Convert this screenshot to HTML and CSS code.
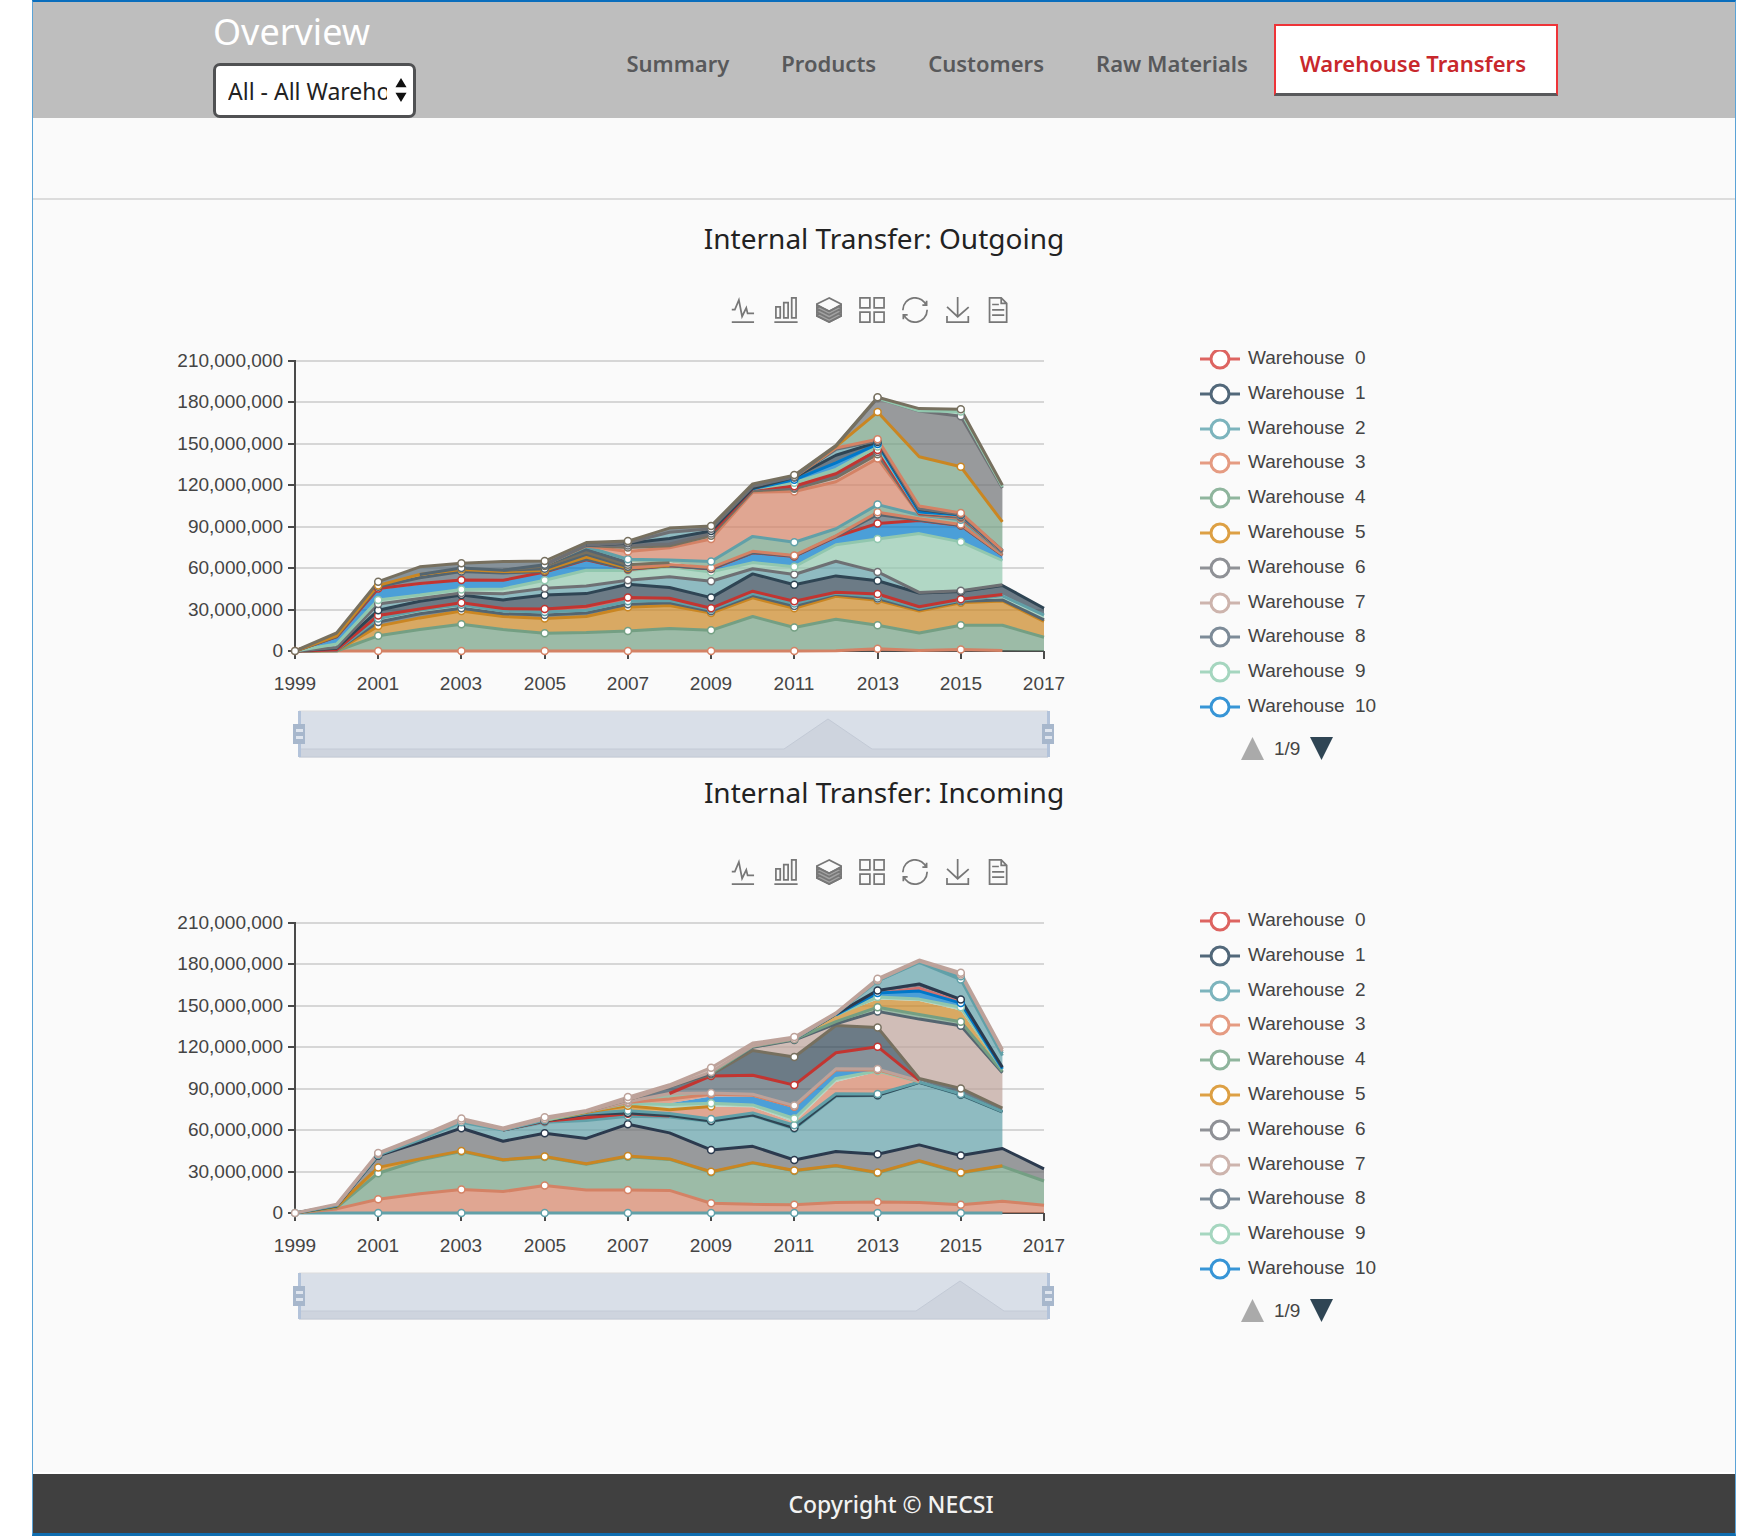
FILE: index.html
```html
<!DOCTYPE html>
<html lang="en">
<head>
<meta charset="utf-8">
<meta name="viewport" content="width=device-width, initial-scale=1">
<title>Overview - Warehouse Transfers</title>
<link rel="stylesheet" href="styles.css">
</head>
<body>
<svg class="sprite" aria-hidden="true">
  <symbol id="i-line" viewBox="0 0 60 60"><path d="M4.1,28.9h7.1l9.3-22l7.4,38l9.7-19.7l3,12.8h14.9M4.1,58h51.4"/></symbol>
  <symbol id="i-bar" viewBox="0 0 60 60"><path d="M6.7,22.9h10V48h-10V22.9zM24.9,13h10v35h-10V13zM43.2,2h10v46h-10V2zM3.1,58h53.7"/></symbol>
  <symbol id="i-stack" viewBox="0 0 60 60"><path fill="#a2a2a2" d="M0,17.500L30.400,32.800L60,17.500V42.500L30.400,57.800L0,42.500z"/><path d="M8.2,38.4l-8.4,4.1l30.6,15.3L60,42.5l-8.1-4.1l-21.5,11L8.2,38.4z M51.9,30l-8.1,4.2l-13.4,6.9l-13.9-6.9L8.2,30l-8.4,4.2l8.4,4.2l22.2,11l21.5-11l8.1-4.2L51.9,30z M51.9,21.7l-8.1,4.2L35.7,30l-5.3,2.8L24.9,30l-8.4-4.1l-8.3-4.2l-8.4,4.2L8.2,30l8.3,4.2l13.9,6.9l13.4-6.9l8.1-4.2l8.1-4.1L51.9,21.7zM30.4,2.2L-0.2,17.5l8.4,4.1l8.3,4.2l8.4,4.2l5.5,2.7l5.3-2.7l8.1-4.2l8.1-4.2l8.1-4.1L30.4,2.2z"/></symbol>
  <symbol id="i-tile" viewBox="0 0 60 60"><path d="M2.3,2.2h22.8V25H2.3V2.2z M35,2.2h22.8V25H35V2.2zM2.3,35h22.8v22.8H2.3V35z M35,35h22.8v22.8H35V35z"/></symbol>
  <symbol id="i-restore" viewBox="0 0 60 60"><path d="M47,18.9h9.8V8.7 M56.3,20.1 C52.1,9,40.5,0.6,26.8,2.1C12.6,3.7,1.6,16.2,2.1,30.6 M13,41.1H3.1v10.2 M3.7,39.9c4.2,11.1,15.8,19.5,29.5,18 c14.2-1.6,25.2-14.1,24.7-28.5"/></symbol>
  <symbol id="i-save" viewBox="0 0 60 60"><path d="M4.7,22.9L29.3,45.5L54.7,23.4M4.6,43.6L4.6,58L53.8,58L53.8,43.6M29.2,45.1L29.2,0"/></symbol>
  <symbol id="i-data" viewBox="8 0 46 60"><path d="M17.5,17.3H33 M45.4,29.5h-28 M11.5,2v56H51V14.8L38.4,2H11.5z M38.4,2.2v12.7H51 M45.4,41.7h-28"/></symbol>
</svg>

<div class="frame">
  <header class="header">
    <div class="filter">
      <label class="filter-label" for="warehouse">Overview</label>
      <div class="select-wrap">
        <select class="select" id="warehouse">
          <option>All - All Warehouses</option>
        </select>
        <svg class="select-arrows" viewBox="0 0 12 26" aria-hidden="true"><path d="M6 0l6 10H0zM6 26l6-10H0z"/></svg>
      </div>
    </div>
    <nav class="nav">
      <a class="nav-link" href="#summary">Summary</a>
      <a class="nav-link" href="#products">Products</a>
      <a class="nav-link" href="#customers">Customers</a>
      <a class="nav-link" href="#materials">Raw Materials</a>
      <a class="nav-link is-active" href="#transfers">Warehouse Transfers</a>
    </nav>
  </header>
  <div class="subbar"></div>

  <main class="main">
    <section class="chart" data-chart="outgoing">
      <h2 class="chart-title">Internal Transfer: Outgoing</h2>
    </section>
    <section class="chart" data-chart="incoming">
      <h2 class="chart-title">Internal Transfer: Incoming</h2>
    </section>
  </main>

  <footer class="footer">Copyright © NECSI</footer>
</div>
<script src="charts.js"></script>
</body>
</html>
```
FILE: styles.css
```css
* { box-sizing: border-box; }

body {
  margin: 0;
  background: #fff;
  font-family: "Noto Sans", "Open Sans", sans-serif;
  color: #222;
}

.sprite { position: absolute; width: 0; height: 0; }

.frame {
  display: flex;
  flex-direction: column;
  min-height: 100vh;
  margin: 0 24px 0 32px;
  background: #fafafa;
  border: 1px solid #5ba3d6;
  border-top: 2px solid #0a6ebd;
  border-bottom: 3px solid #0f6db0;
}

/* Header */
.header {
  display: flex;
  justify-content: space-between;
  align-items: flex-start;
  padding: 0 177px 0 180px;
  background: #bebebe;
}

.filter { display: flex; flex-direction: column; }

.filter-label {
  height: 61px;
  font-size: 36px;
  line-height: 59px;
  color: #fff;
}

.select-wrap { position: relative; width: 203px; }

.select {
  display: block;
  width: 100%;
  height: 55px;
  padding: 2px 26px 0 12px;
  appearance: none;
  border: 3px solid #505153;
  border-radius: 7px;
  background: #fff;
  font: 400 23px/47px "Noto Sans", "Open Sans", sans-serif;
  color: #222;
}

.select-arrows {
  position: absolute;
  top: 15px;
  right: 9px;
  width: 12px;
  height: 24px;
  fill: #111;
}

.nav { display: flex; margin-top: 22px; }

.nav-link {
  padding: 3px 24px 0;
  border: 2px solid transparent;
  height: 72px;
  font-size: 22px;
  font-weight: 600;
  line-height: 68px;
  color: #58595b;
  text-decoration: none;
  white-space: nowrap;
}

.nav-link.is-active {
  padding-right: 30px;
  background: #fff;
  border-color: #ee3438;
  border-bottom: 3px solid #58595b;
  color: #c8282c;
}

.subbar { height: 82px; border-bottom: 2px solid #dcdcdc; }

/* Charts */
.main { flex: 1; }

.chart-title {
  margin: 0;
  padding-top: 18px;
  font-size: 28px;
  font-weight: 400;
  line-height: 40px;
  text-align: center;
}

.toolbar {
  display: flex;
  justify-content: center;
  gap: 17px;
  margin: 39px 0 17px;
  padding-right: 30px;
}

.chart + .chart .chart-title { padding-top: 2px; }
.chart + .chart .toolbar { margin-top: 47px; }

.tool { padding: 0; border: 0; background: none; }

.tool-icon {
  display: block;
  width: 26px;
  height: 26px;
  overflow: visible;
  fill: none;
  stroke: #777;
  stroke-width: 4;
}

.tool-icon.is-narrow { width: 20px; }

.chart-body {
  display: grid;
  grid-template-columns: minmax(0, 920px) 240px;
  gap: 120px;
  margin-left: 127px;
}

.plot { display: block; width: 100%; height: auto; }

.axis-text, .legend {
  font-family: "Liberation Sans", Arial, sans-serif;
  font-size: 19px;
}

.axis-text { fill: #444; }
.end { text-anchor: end; }
.mid { text-anchor: middle; }
.grid-line { stroke: #d6d6d6; stroke-width: 2; }
.axis-line { stroke: #4a4a4a; stroke-width: 2; fill: none; }
.band { opacity: 0.7; }
.series { fill: none; stroke-width: 3; stroke-linejoin: bevel; }
.dot { fill: #fff; stroke-width: 1.5; }
.zoom-bg { fill: #d9dfe8; }
.zoom-edge { stroke: #dddddd; stroke-width: 1; }
.zoom-shape { fill: #ced4de; stroke: #c3cad6; stroke-width: 1; }
.zoom-bar { fill: #b3c3da; }
.zoom-grip { fill: #a7b7cc; }
.zoom-slot { fill: #dfe5ee; }

.legend { color: #444; }

.legend-list {
  display: flex;
  flex-direction: column;
  justify-content: space-between;
  height: 372px;
  margin: 6px 0 0;
  padding: 0;
  list-style: none;
}

.legend-item {
  display: flex;
  align-items: center;
  gap: 8px;
  height: 24px;
  line-height: 24px;
  white-space: pre;
}

.legend-mark {
  width: 40px;
  height: 24px;
  fill: #fff;
  stroke-width: 3;
}

.legend-item:first-child .legend-mark { clip-path: inset(4px 0 0 0); }

.pager {
  display: flex;
  align-items: center;
  gap: 10px;
  margin: 19px 0 0 41px;
}

.page-button { padding: 0; border: 0; background: none; }
.page-arrow { display: block; width: 23px; height: 23px; }
.is-off { fill: #aaa; }
.is-on { fill: #2f4554; }

.footer {
  height: 61px;
  padding-left: 14px;
  border-top: 2px solid #fff;
  background: #404040;
  background-clip: padding-box;
  font-size: 23px;
  font-weight: 500;
  line-height: 60px;
  text-align: center;
  color: #f2f2f2;
}
```
FILE: charts.js
```js
const C = {
  red: '#c23531', slate: '#2f4554', teal: '#61a0a8', salmon: '#d48265',
  green: '#749f83', orange: '#ca8622', gray: '#6e7074', rose: '#bda29a',
  steel: '#546570', mint: '#91c7ae', blue: '#0078c9', taupe: '#77705f', navy: '#2b3a4e'
};

// Each layer: [area colour, line colour, first year, stacked totals in millions]
const DATA = {
  outgoing: {
    peak: 668,
    peakFrom: 624,
    layers: [
      ['salmon', 'salmon', 1999, [0,0,0,0,0,0,0,0,0,0,0,0,0,0.2,1.6,0.3,1,0.3]],
      ['green', 'green', 2000, [0,11,15.5,19.3,15.5,12.8,13.3,14.5,16.4,15,25,17,23,18.6,13,18.6,18.6,10]],
      ['orange', 'orange', 2000, [0.3,18,24,29,25,23.5,25,31.7,33,27.5,38.5,31,39.6,36.7,29,35,36.3,21.5]],
      ['steel', 'steel', 2000, [0.5,21,27,31,27,26,27.5,33.8,35,28.8,40.2,32.6,41,38,30,36,37,22.5]],
      ['mint', 'teal', 2000, [0.6,23.5,29.5,33.5,29,28.3,29.5,36,36.5,30,41.6,34.4,41.8,39.5,31,36.8,40,26]],
      ['red', 'red', 2000, [0.8,25.6,30.5,35,30.7,30.5,32.4,38.7,38.2,31,43.3,36,42.5,41.3,32,37.5,41]],
      ['slate', 'slate', 2000, [2,29.5,36,40.5,37,40.6,41.6,48.3,46,38.7,55.8,48,54.4,50.8,42,43,47.4,31]],
      ['teal', 'gray', 2000, [2.6,34,38,42,41.5,45.4,47,51.2,53.7,50.5,59.5,55.4,65,57.3,42.4,43.6,48]],
      ['mint', 'mint', 2000, [5,37,40.5,44.5,45,51.2,58.5,58.3,61,57.3,64,61,77,81,85,79,65.5]],
      ['blue', 'blue', 2000, [10,44.5,48,51,51,57,66,59,61.6,59.2,71,68.3,82.5,91.7,94,90.5,69], 'area'],
      ['red', 'red', 2000, [10.2,45.2,48.8,51.5,51.2,57.2,66.1,59.1,61.7,59.4,71.1,68.5,82.7,92.4,94.5,90.8,69.2]],
      ['steel', 'steel', 2000, [10.5,46.5,53,57.5,56.5,57.5,66.4,59.4,61.8,59.6,71.3,68.7,83,98.9,94.8,91,69.4]],
      ['orange', 'orange', 2000, [11,47.5,55.5,59,57.5,58.4,68,60,62]],
      ['salmon', 'salmon', 2008, [62.7,60.4,72.2,69.2,83.4,100.5,95.7,91.6,69.6]],
      ['steel', 'steel', 2003, [60,58.5,59.5,70,61]],
      ['rose', 'taupe', 2005, [61.5,71.5,62.5,64]],
      ['steel', 'steel', 2005, [62.5,73.5,64]],
      ['green', 'teal', 2006, [75.5,66.4,66,64.8,83,78.8,88.5,106,98.5,95,71]],
      ['salmon', 'salmon', 2006, [76,72,74.7,81,115,115.5,122.5,139.5,98.8,96.2,71.3]],
      ['rose', 'taupe', 2006, [76.3,75,76.2,83.5,116,117.5,125.6,142.5,99.2,96.8,71.6]],
      ['steel', 'gray', 2006, [76.6,76.5,77.5,85,117,118.2,127,144,99.5,97.2,71.8]],
      ['red', 'red', 2010, [117.5,119.3,128.4,145.5,99.8,97.8,72]],
      ['green', 'mint', 2011, [121.8,131.5,148,100.3,98.2,72.2]],
      ['blue', 'blue', 2011, [124,136.3,149.8,100.6,98.5,72.4]],
      ['slate', 'slate', 2007, [78,81.5,87,117.8,125.7,141.7,151.3,102.5,98.8,72.6]],
      ['teal', 'gray', 2007, [78.4,86,88.5,119.2,126,146,152.2,103,99,72.7]],
      ['salmon', 'salmon', 2012, [147,153.3,105,100,72.8]],
      ['green', 'orange', 2012, [148,173,140.7,133.4,93.5]],
      ['gray', 'gray', 2012, [148.4,183,173.8,170,118]],
      ['mint', 'mint', 2014, [174,173.4,118.8]],
      ['steel', 'taupe', 1999, [0,13,50.2,61,63.6,64.8,65.2,78.6,79.6,89,90.6,121,127.4,148.8,183.7,175.5,175,120]]
    ]
  },
  incoming: {
    peak: 800,
    peakFrom: 756,
    layers: [
      ['teal', 'teal', 1999, [0,0,0,0,0,0,0,0,0,0,0,0,0,0,0,0,0,0]],
      ['salmon', 'salmon', 2000, [3,10,14,17,15.5,20,16.7,16.6,16.4,7,6.3,6,7.7,8,7.5,6,8.5,5.6]],
      ['green', 'green', 2000, [4,28.8,38.4,44.5,38.2,40.6,35.3,40.8,38.8,29.5,36.1,30.5,34.1,29,37.5,29,33.8,23.2]],
      ['orange', 'orange', 2000, [4.5,33,39.2,45,38.6,41,35.7,41.2,39.2,29.9,36.5,30.8,34.5,29.4,37.9,29.4,34.2]],
      ['gray', 'navy', 2000, [5,41.5,51.2,61.4,52,57.8,54,64.3,58,45.7,48.3,38.4,44.5,42.5,49.3,41.6,46.7,32]],
      ['teal', 'teal', 2000, [5.4,42,53,65.7,60,65.7,67,70,69.6,66.2,70.6,61,84.6,85,94.4,85.4,73]],
      ['red', 'red', 2005, [66.5,69,71.8,70.2]],
      ['slate', 'slate', 2005, [66.8,71.5,72.4,70.6,66.6,71,61.6,85,85.3,94.6,85.8,73.2]],
      ['teal', 'teal', 2005, [67.2,72.3,74,72,68,72.5,63.5,86.4,86.2,94.8,86.2,73.4]],
      ['salmon', 'salmon', 2008, [74,77,76.6,65.7,94.8,102.3,95,86.4,73.6], 'area'],
      ['orange', 'orange', 2006, [73,77.6,74.7,77.2]],
      ['mint', 'mint', 2006, [73.4,79.2,78.5,79.5,78.3,68.4,97.5,102.8,95.1]],
      ['blue', 'blue', 2008, [79.5,84.4,84.4,76,103,103.3], 'area'],
      ['salmon', 'salmon', 2007, [80,82.5,86,85.2,77,103.6,103.6,95.3]],
      ['green', 'rose', 2007, [80.6,86.5,86.9,86,77.8,104.4,104.2,95.6]],
      ['steel', 'red', 2009, [99.3,99.8,92.6,116,120.4,96]],
      ['slate', 'taupe', 2007, [82,91.5,100.2,117.7,113,135.8,134.4,97.4,90.2,76]],
      ['rose', 'steel', 2009, [101,120,125.2,137,146,140.4,135.6,101.5]],
      ['green', 'green', 2010, [120.6,125.8,138.6,149,143.8,138.5,102.5]],
      ['orange', 'orange', 2012, [143.4,154.5,153.5,146.7,103], 'area'],
      ['mint', 'mint', 2013, [156.4,154.9,149,104]],
      ['blue', 'blue', 2013, [159.3,160.7,152,104.5]],
      ['red', 'red', 2013, [160.2,164,153.7,105], 'area'],
      ['navy', 'navy', 2012, [143.9,161.2,165.8,154.7,105.6]],
      ['teal', 'teal', 2012, [144.2,168,181.5,169,114]],
      ['blue', 'teal', 2014, [182,171.5,115.5]],
      ['rose', 'rose', 2001, [42.8,54.4,67,60.6,68,73.4,81.5,90.5,102,121,126.2,144.4,168.6,182.4,172.6,117]],
      ['rose', 'rose', 1999, [0,6.3,43.5,55.4,68.4,61.6,69.4,74.2,83.9,92.8,105.2,123,127.4,145,169.7,183.2,174,118.4]]
    ]
  }
};

const LEGEND = ['#dd6461', '#52687a', '#7cb4bd', '#e59b82', '#8fb59d', '#dda044',
  '#8f9196', '#cdb4ad', '#7d8b98', '#a5d6bf', '#3795d6'];

const TOOLS = [['line', 'Line'], ['bar', 'Bar'], ['stack', 'Stack'], ['tile', 'Tiled'],
  ['restore', 'Restore'], ['save', 'Save image'], ['data', 'Data view']];

const LEFT = 135, BASE = 311, STEP = 749 / 18, UNIT = 290 / 210;
const px = year => LEFT + (year - 1999) * STEP;
const py = value => BASE - value * UNIT;
const at = (year, value) => px(year).toFixed(1) + ',' + py(value).toFixed(1);

function drawLayers(layers) {
  const floor = {};
  for (let y = 1999; y <= 2017; y++) floor[y] = 0;
  let bands = '', lines = '', dots = '';
  for (const [area, line, start, values, mode] of layers) {
    const top = [], bottom = [];
    // A layer grows out of the stack one year before its first value
    if (start > 1999) {
      top.push(at(start - 1, floor[start - 1]));
      bottom.push(at(start - 1, floor[start - 1]));
    }
    values.forEach((v, i) => {
      const year = start + i;
      const value = Math.max(v, floor[year]);
      top.push(at(year, value));
      bottom.unshift(at(year, floor[year]));
      floor[year] = value;
      if (year % 2 && year < 2017 && !mode) {
        dots += `<circle class="dot" cx="${px(year).toFixed(1)}" cy="${py(value).toFixed(1)}" r="3.5" stroke="${C[line]}"/>`;
      }
    });
    bands += `<polygon class="band" fill="${C[area]}" points="${top.concat(bottom).join(' ')}"/>`;
    if (!mode) lines += `<polyline class="series" stroke="${C[line]}" points="${top.join(' ')}"/>`;
  }
  return bands + lines + dots;
}

function drawPlot(d) {
  let s = '';
  for (let v = 0; v <= 210; v += 30) {
    const y = Math.round(py(v));
    if (v) s += `<path class="grid-line" d="M${LEFT} ${y}H884"/>`;
    s += `<path class="axis-line" d="M128 ${y}H${LEFT}"/>`;
    s += `<text class="axis-text end" x="123" y="${y + 6}">${v ? v + ',000,000' : '0'}</text>`;
  }
  s += `<path class="axis-line" d="M${LEFT} 20V${BASE}H884"/>`;
  for (let y = 1999; y <= 2017; y += 2) {
    s += `<path class="axis-line" d="M${Math.round(px(y))} ${BASE}v8"/>`;
    s += `<text class="axis-text mid" x="${Math.round(px(y))}" y="350">${y}</text>`;
  }
  s += drawLayers(d.layers);
  s += '<rect class="zoom-bg" x="139" y="371" width="749" height="46"/><path class="zoom-edge" d="M139 371H888M139 417H888"/>';
  s += `<path class="zoom-shape" d="M139 417V409H${d.peakFrom}L${d.peak} 379L${d.peak + 44} 409H888V417z"/>`;
  for (const x of [139, 888]) {
    s += `<rect class="zoom-bar" x="${x - 1}" y="371" width="3" height="46"/>` +
      `<rect class="zoom-grip" x="${x - 6}" y="384" width="12" height="20"/>` +
      `<rect class="zoom-slot" x="${x - 3}" y="389" width="7" height="3"/><rect class="zoom-slot" x="${x - 3}" y="396" width="7" height="3"/>`;
  }
  return `<svg class="plot" viewBox="0 0 920 430" role="img">${s}</svg>`;
}

function drawLegend() {
  const items = LEGEND.map((c, i) =>
    `<li class="legend-item"><svg class="legend-mark" viewBox="0 0 40 24" stroke="${c}"><path d="M0 13H40"/><circle cx="20" cy="13" r="9"/></svg>Warehouse  ${i}</li>`).join('');
  return `<div class="legend"><ul class="legend-list">${items}</ul>
    <div class="pager">
      <button class="page-button" aria-label="Previous page"><svg class="page-arrow is-off" viewBox="0 0 23 23"><path d="M11.500 0L23 23H0z"/></svg></button>
      <span>1/9</span>
      <button class="page-button" aria-label="Next page"><svg class="page-arrow is-on" viewBox="0 0 23 23"><path d="M11.500 23L23 0H0z"/></svg></button>
    </div></div>`;
}

document.querySelectorAll('.chart').forEach(el => {
  const tools = TOOLS.map(([id, label]) =>
    `<button class="tool" aria-label="${label}"><svg class="tool-icon${id === 'data' ? ' is-narrow' : ''}"><use href="#i-${id}"/></svg></button>`).join('');
  el.insertAdjacentHTML('beforeend',
    `<div class="toolbar">${tools}</div><div class="chart-body">${drawPlot(DATA[el.dataset.chart])}${drawLegend()}</div>`);
});
```
